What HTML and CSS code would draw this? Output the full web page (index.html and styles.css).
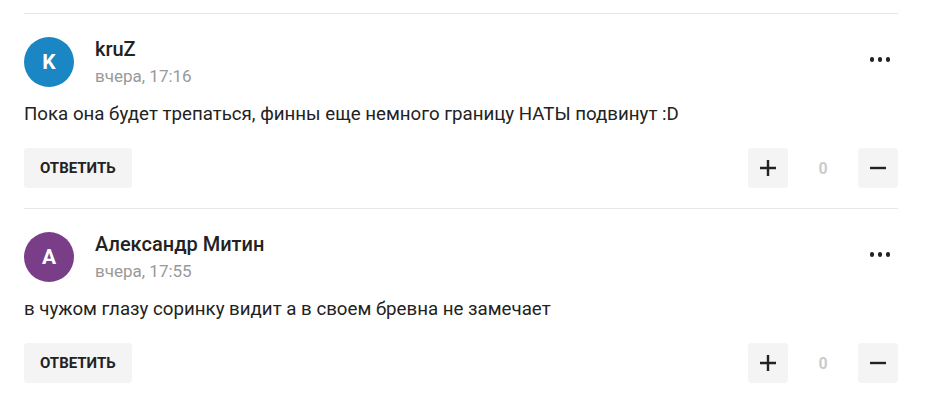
FILE: index.html
```html
<!DOCTYPE html>
<html lang="ru">
<head>
<meta charset="utf-8">
<link rel="stylesheet" href="styles.css">
</head>
<body>
<div class="comments">
  <div class="comment">
    <div class="head">
      <div class="avatar avatar-blue">K</div>
      <div class="meta">
        <div class="name">kruZ</div>
        <div class="date">вчера, 17:16</div>
      </div>
      <button class="more" aria-label="Ещё"><span></span><span></span><span></span></button>
    </div>
    <div class="text">Пока она будет трепаться, финны еще немного границу НАТЫ подвинут :D</div>
    <div class="actions">
      <button class="reply">Ответить</button>
      <div class="vote">
        <button class="vbtn" aria-label="плюс"><svg width="16" height="16" viewBox="0 0 16 16"><path d="M8 0v16M0 8h16" stroke="#222" stroke-width="2.4" fill="none"/></svg></button>
        <span class="count">0</span>
        <button class="vbtn" aria-label="минус"><svg width="16" height="16" viewBox="0 0 16 16"><path d="M0 8h16" stroke="#222" stroke-width="2.4" fill="none"/></svg></button>
      </div>
    </div>
  </div>
  <div class="comment">
    <div class="head">
      <div class="avatar avatar-purple">А</div>
      <div class="meta">
        <div class="name">Александр Митин</div>
        <div class="date">вчера, 17:55</div>
      </div>
      <button class="more" aria-label="Ещё"><span></span><span></span><span></span></button>
    </div>
    <div class="text">в чужом глазу соринку видит а в своем бревна не замечает</div>
    <div class="actions">
      <button class="reply">Ответить</button>
      <div class="vote">
        <button class="vbtn" aria-label="плюс"><svg width="16" height="16" viewBox="0 0 16 16"><path d="M8 0v16M0 8h16" stroke="#222" stroke-width="2.4" fill="none"/></svg></button>
        <span class="count">0</span>
        <button class="vbtn" aria-label="минус"><svg width="16" height="16" viewBox="0 0 16 16"><path d="M0 8h16" stroke="#222" stroke-width="2.4" fill="none"/></svg></button>
      </div>
    </div>
  </div>
</div>
</body>
</html>
```
FILE: styles.css
```css
* { box-sizing: border-box; }
html, body { margin: 0; padding: 0; background: #fff; }
body {
  font-family: Roboto, "Liberation Sans", Arial, sans-serif;
  color: #222;
  padding: 13px 33px 0 24px;
}
.comment {
  border-top: 1px solid #e6e6e6;
  padding: 23px 0 20px;
}
.head {
  display: flex;
  align-items: flex-start;
}
.avatar {
  width: 50px;
  height: 50px;
  border-radius: 50%;
  color: #fff;
  font-weight: 700;
  font-size: 21px;
  display: flex;
  align-items: center;
  justify-content: center;
  flex: none;
}
.avatar-blue { background: #1a86c4; }
.avatar-purple { background: #7a3e88; }
.meta {
  margin-left: 21px;
  flex: 1;
}
.name {
  font-size: 20px;
  font-weight: 500;
  line-height: 24px;
}
.date {
  font-size: 17px;
  line-height: 24px;
  margin-top: 3px;
  color: #999;
}
.more {
  border: 0;
  background: none;
  padding: 0;
  margin-top: 20px;
  margin-right: 8px;
  display: flex;
  gap: 3.5px;
  cursor: pointer;
}
.more span {
  width: 4.5px;
  height: 4.5px;
  border-radius: 50%;
  background: #222;
}
.text {
  font-size: 18.7px;
  line-height: 24px;
  margin-top: 14px;
}
.actions {
  display: flex;
  justify-content: space-between;
  align-items: center;
  margin-top: 22px;
}
.reply {
  height: 40px;
  padding: 0 16px;
  border: 0;
  border-radius: 4px;
  background: #f4f4f4;
  font-family: inherit;
  font-size: 15px;
  font-weight: 700;
  text-transform: uppercase;
  color: #222;
}
.vote {
  display: flex;
  align-items: center;
}
.vbtn {
  width: 40px;
  height: 40px;
  border: 0;
  border-radius: 4px;
  background: #f4f4f4;
  display: flex;
  align-items: center;
  justify-content: center;
  padding: 0;
}
.count {
  width: 70px;
  text-align: center;
  font-size: 16px;
  font-weight: 700;
  color: #ccc;
}
```
